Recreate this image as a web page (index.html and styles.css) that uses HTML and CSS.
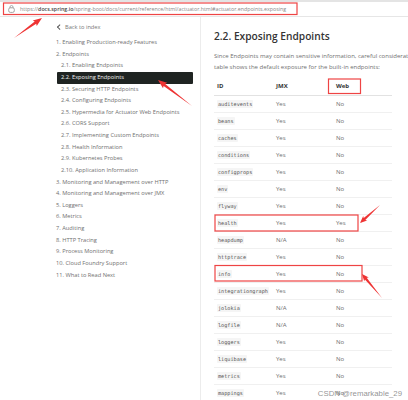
FILE: index.html
```html
<!DOCTYPE html>
<html lang="en">
<head>
    <meta charset="UTF-8">
    <meta name="viewport" content="width=device-width, initial-scale=1.0">
    <title>Exposing Endpoints</title>
    <link rel="stylesheet" href="styles.css">
</head>
<body>
    <header class="url-bar">
        <svg class="lock" width="7" height="8" viewBox="0 0 7 8">
            <rect x="0.7" y="2.8" width="5.6" height="4.6" rx="1.6" fill="none" stroke="#999" stroke-width="0.9"/>
            <path d="M2 3V2a1.5 1.5 0 0 1 3 0v1" fill="none" stroke="#999" stroke-width="0.8"/>
        </svg>
        <span class="url">https://<b>docs.spring.io</b>/spring-boot/docs/current/reference/html/actuator.html#actuator.endpoints.exposing</span>
    </header>

    <div class="layout">
        <nav class="sidebar">
            <a href="#" class="back"><span class="chevron"></span>Back to index</a>
            <ul class="toc">
                <li>1. Enabling Production-ready Features</li>
                <li>2. Endpoints</li>
                <li class="sub">2.1. Enabling Endpoints</li>
                <li class="sub active">2.2. Exposing Endpoints</li>
                <li class="sub">2.3. Securing HTTP Endpoints</li>
                <li class="sub">2.4. Configuring Endpoints</li>
                <li class="sub">2.5. Hypermedia for Actuator Web Endpoints</li>
                <li class="sub">2.6. CORS Support</li>
                <li class="sub">2.7. Implementing Custom Endpoints</li>
                <li class="sub">2.8. Health Information</li>
                <li class="sub">2.9. Kubernetes Probes</li>
                <li class="sub">2.10. Application Information</li>
                <li>3. Monitoring and Management over HTTP</li>
                <li>4. Monitoring and Management over JMX</li>
                <li>5. Loggers</li>
                <li>6. Metrics</li>
                <li>7. Auditing</li>
                <li>8. HTTP Tracing</li>
                <li>9. Process Monitoring</li>
                <li>10. Cloud Foundry Support</li>
                <li>11. What to Read Next</li>
            </ul>
        </nav>

        <main class="content">
            <h2>2.2. Exposing Endpoints</h2>
            <p>Since Endpoints may contain sensitive information, careful considerat<br>table shows the default exposure for the built-in endpoints:</p>
            <table>
                <thead>
                    <tr><th>ID</th><th>JMX</th><th>Web</th></tr>
                </thead>
                <tbody>
                    <tr><td><code>auditevents</code></td><td>Yes</td><td>No</td></tr>
                    <tr><td><code>beans</code></td><td>Yes</td><td>No</td></tr>
                    <tr><td><code>caches</code></td><td>Yes</td><td>No</td></tr>
                    <tr><td><code>conditions</code></td><td>Yes</td><td>No</td></tr>
                    <tr><td><code>configprops</code></td><td>Yes</td><td>No</td></tr>
                    <tr><td><code>env</code></td><td>Yes</td><td>No</td></tr>
                    <tr><td><code>flyway</code></td><td>Yes</td><td>No</td></tr>
                    <tr><td><code>health</code></td><td>Yes</td><td>Yes</td></tr>
                    <tr><td><code>heapdump</code></td><td>N/A</td><td>No</td></tr>
                    <tr><td><code>httptrace</code></td><td>Yes</td><td>No</td></tr>
                    <tr><td><code>info</code></td><td>Yes</td><td>No</td></tr>
                    <tr><td><code>integrationgraph</code></td><td>Yes</td><td>No</td></tr>
                    <tr><td><code>jolokia</code></td><td>N/A</td><td>No</td></tr>
                    <tr><td><code>logfile</code></td><td>N/A</td><td>No</td></tr>
                    <tr><td><code>loggers</code></td><td>Yes</td><td>No</td></tr>
                    <tr><td><code>liquibase</code></td><td>Yes</td><td>No</td></tr>
                    <tr><td><code>metrics</code></td><td>Yes</td><td>No</td></tr>
                    <tr><td><code>mappings</code></td><td>Yes</td><td>No</td></tr>
                </tbody>
            </table>
        </main>
    </div>

    <!-- Red boxes and arrows drawn on top of the screenshot -->
    <svg class="marks" width="408" height="400" viewBox="0 0 408 400">
        <g fill="none" stroke="#ee4444" stroke-width="1.2">
            <rect x="3.5" y="3" width="293.5" height="11.500"/>
            <rect x="328.500" y="79" width="32" height="14.500"/>
            <rect x="215" y="215" width="143" height="16"/>
            <rect x="215" y="265.500" width="147" height="15.500"/>
        </g>
        <g fill="#ee3333">
            <path d="M14 38L34.700 21.500L32.700 20.400L42 18L36.700 26L36.200 23.700Z"/>
            <path d="M192 106L165.200 83.900L167.200 82.700L158 80L163 88.300L163.600 85.900Z"/>
            <path d="M380 205L363.700 218.100L363.200 216.100L360 223L367.200 220.500L365.300 219.900Z"/>
            <path d="M382 298L366.700 277.800L368.800 277.500L362 274L364.200 281.300L364.900 279.400Z"/>
        </g>
    </svg>
    <div class="watermark">CSDN @remarkable_29</div>
</body>
</html>
```
FILE: styles.css
```css
* {
    box-sizing: border-box;
}

body {
    font-family: 'Open Sans', 'Noto Sans', sans-serif;
    font-size: 5.700px;
    color: #707070;
    background-color: white;
    margin: 0;
    width: 408px;
    height: 400px;
    overflow: hidden;
    position: relative;
}

.url-bar {
    height: 17px;
    padding: 0 0 0 8px;
    display: flex;
    align-items: center;
    gap: 5px;
    border-top: 2px solid #e4e4e4;
    border-bottom: 1px solid #e6e6e6;
    white-space: nowrap;
}

.url {
    font-size: 5.300px;
    color: #888;
}

.url b {
    font-weight: 600;
    color: #444;
}

.layout {
    display: flex;
    height: 383px;
}

.sidebar {
    width: 201px;
    flex-shrink: 0;
    padding: 4px 7px 0 56px;
    border-right: 1px solid #ececec;
}

.back {
    display: flex;
    align-items: center;
    gap: 3.500px;
    height: 12px;
    color: #777;
    text-decoration: none;
}

.chevron {
    width: 3.500px;
    height: 3.500px;
    margin-left: 2px;
    border-left: 1px solid #555;
    border-bottom: 1px solid #555;
    transform: rotate(45deg);
}

.toc {
    list-style: none;
    margin: 4px 0 0;
    padding: 0;
}

.toc li {
    height: 11.640px;
    line-height: 11.640px;
    white-space: nowrap;
}

.toc .sub {
    padding-left: 5px;
}

.toc .active {
    margin-left: 1px;
    padding-left: 4px;
    background-color: #1f2422;
    color: #f2f2f2;
    border-radius: 1px;
}

.content {
    flex: 1;
    min-width: 0;
    padding: 0 0 0 13px;
}

h2 {
    margin: 10px 0 0;
    font-size: 10.200px;
    line-height: 18px;
    font-weight: 600;
    color: #333;
    white-space: nowrap;
}

.content p {
    margin: 6px 0 0;
    font-size: 6px;
    line-height: 10.500px;
    white-space: nowrap;
}

table {
    width: 178px;
    margin-top: 6px;
    border-collapse: collapse;
    table-layout: fixed;
    font-size: 6px;
}

th, td {
    height: 17px;
    padding: 0 0 0 3px;
    text-align: left;
    border-bottom: 1px solid #f0f0f0;
}

th {
    font-weight: 700;
    color: #333;
    border-bottom-color: #e2e2e2;
}

th:nth-child(1), td:nth-child(1) {
    width: 59px;
}

th:nth-child(2), td:nth-child(2) {
    width: 60px;
}

code {
    font-family: 'DejaVu Sans Mono', 'Liberation Mono', monospace;
    font-size: 5.200px;
    color: #555;
    background-color: #f5f5f5;
    padding: 1px 1px;
    border-radius: 1px;
}

.marks {
    position: absolute;
    top: 0;
    left: 0;
}

.watermark {
    position: absolute;
    right: 6px;
    bottom: 2px;
    font-family: 'Liberation Sans', sans-serif;
    font-size: 7.800px;
    color: rgba(110, 110, 110, 0.75);
    white-space: nowrap;
}
```
